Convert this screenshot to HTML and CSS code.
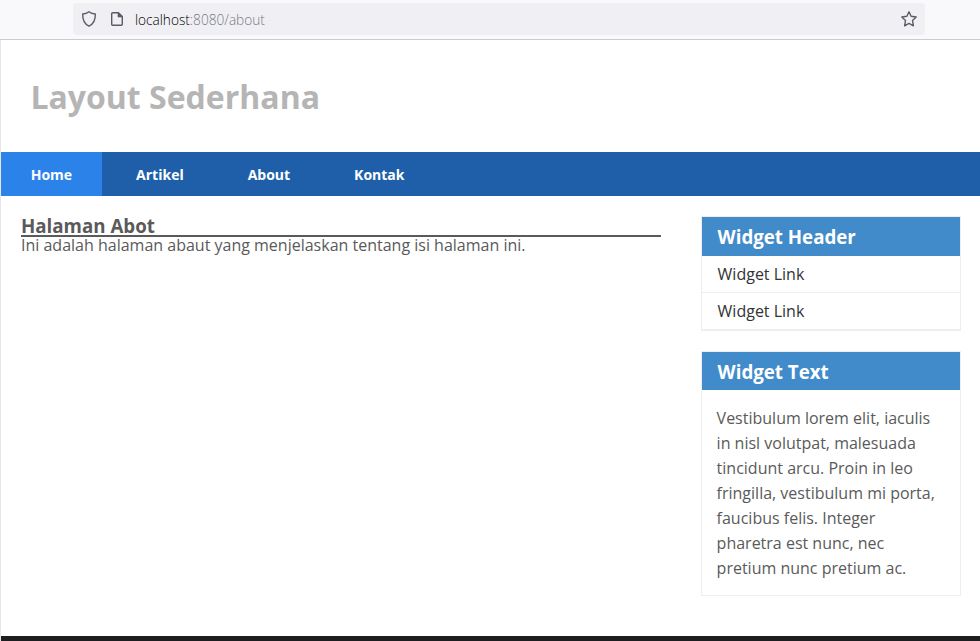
FILE: index.html
```html
<!DOCTYPE html>
<html lang="id">
<head>
<meta charset="utf-8">
<title>Layout Sederhana</title>
<link rel="stylesheet" href="styles.css">
</head>
<body>
<div class="toolbar">
  <div class="urlbar">
    <svg class="shield" width="16" height="18" viewBox="0 0 16 18"><path d="M8 1.7C6.2 3.1 4 3.8 1.7 4C1.5 9.2 3.2 13.8 8 16.2C12.8 13.8 14.5 9.2 14.3 4C12 3.8 9.8 3.1 8 1.7Z"/></svg>
    <svg class="page" width="14" height="16" viewBox="0 0 14 16"><path d="M2.7 1.7H8.5L12.3 5.5V13.3Q12.3 14.3 11.3 14.3H2.7Q1.7 14.3 1.7 13.3V2.7Q1.7 1.7 2.7 1.7Z"/><path class="fold" d="M8 1.7V6H12.3Z"/></svg>
    <span class="url"><span class="host">localhost</span>:8080/about</span>
    <svg class="star" width="18" height="18" viewBox="0 0 18 18"><path d="M9 1.8L11.1 6.3L16.2 7L12.5 10.5L13.4 15.8L9 13.4L4.6 15.8L5.5 10.5L1.8 7L6.9 6.3Z"/></svg>
  </div>
</div>
<div class="container">
  <header><h1>Layout Sederhana</h1></header>
  <nav>
    <a class="active">Home</a>
    <a>Artikel</a>
    <a>About</a>
    <a>Kontak</a>
  </nav>
  <div class="wrapper">
    <section class="main">
      <h3>Halaman Abot</h3>
      <hr>
      <p>Ini adalah halaman abaut yang menjelaskan tentang isi halaman ini.</p>
    </section>
    <aside>
      <div class="widget">
        <h3 class="title">Widget Header</h3>
        <ul>
          <li>Widget Link</li>
          <li>Widget Link</li>
        </ul>
      </div>
      <div class="widget">
        <h3 class="title short">Widget Text</h3>
        <p>Vestibulum lorem elit, iaculis in nisl volutpat, malesuada tincidunt arcu. Proin in leo fringilla, vestibulum mi porta, faucibus felis. Integer pharetra est nunc, nec pretium nunc pretium ac.</p>
      </div>
    </aside>
  </div>
  <footer></footer>
</div>
</body>
</html>
```
FILE: styles.css
```css
* { box-sizing: border-box; margin: 0; padding: 0; }
body {
  height: 641px;
  overflow: hidden;
  display: flex;
  flex-direction: column;
  font: 16px/22px "Open Sans", sans-serif;
  color: #5a5a5a;
  background: #fff;
}
.toolbar {
  height: 40px;
  padding: 3px 55px 0 73px;
  background: #f9f9fb;
  border-bottom: 1px solid #ccc;
}
.urlbar {
  height: 32px;
  display: flex;
  align-items: center;
  padding: 0 7px 0 8px;
  border-radius: 4px;
  background: #f0f0f4;
}
svg { fill: none; stroke: #5b5b66; stroke-width: 1.4; stroke-linejoin: round; }
.page { margin-left: 13px; }
.fold { fill: #5b5b66; stroke-width: .6; }
.url {
  margin-left: 11px;
  font-size: 13.65px;
  font-weight: 300;
  color: #77777f;
  flex: 1;
  padding-top: 2px;
}
.host { color: #000; }
.container {
  flex: 1;
  display: flex;
  flex-direction: column;
  border-left: 1px solid #e6e6e6;
}
header { height: 112px; padding: 35px 29.4px 0; }
h1 { font-size: 32px; line-height: 44px; color: #b5b5b5; }
nav {
  display: flex;
  gap: 4px;
  height: 44px;
  background: #1f5faa;
}
nav a {
  padding: 0 30.3px 0 29.7px;
  font-size: 14px;
  font-weight: 700;
  line-height: 46px;
  color: #fff;
}
.active { background: #2b83ea; }
.wrapper {
  display: flex;
  gap: 40px;
  height: 440px;
  padding: 20px 19px 0 20px;
}
.main { width: 640px; }
.main h3 { font-size: 18.72px; line-height: 19px; }
hr { border: 0; height: 2px; background: #5a5a5a; }
.main p { line-height: 16px; }
aside { width: 260px; }
.widget { border: 1px solid #eee; margin-bottom: 20px; }
.title {
  height: 39px;
  padding-left: 15.6px;
  font-size: 18.72px;
  line-height: 40px;
  color: #fff;
  background: #428bca;
}
.short { height: 38px; }
ul { list-style: none; }
li {
  height: 37px;
  padding-left: 15.6px;
  line-height: 36px;
  color: #333;
  border-bottom: 1px solid #eee;
}
.widget p { padding: 16px 20px 14px 14.6px; line-height: 25px; }
footer { flex: 1; background: #1d1d1f; }
```
